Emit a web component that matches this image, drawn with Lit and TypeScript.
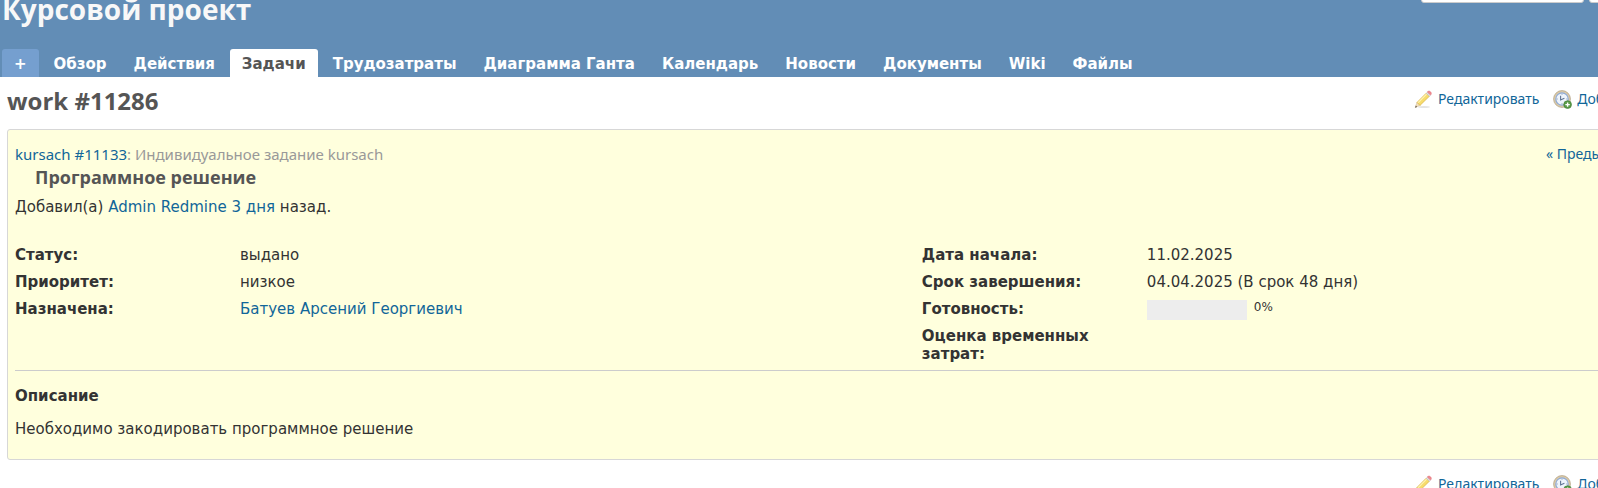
import { LitElement, html, css, svg, nothing } from "lit";
import { customElement, property } from "lit/decorators.js";

const tabs = ["Обзор", "Действия", "Задачи", "Трудозатраты", "Диаграмма Ганта", "Календарь", "Новости", "Документы", "Wiki", "Файлы"];

const pencil = svg`
  <ellipse cx="10" cy="17" rx="6" ry="1" fill="#e4e4e4"/>
  <path d="M1.2 17.4 3 12.4 6 15.4Z" fill="#f3dfbd" stroke="#cdb78d" stroke-width=".5"/>
  <path d="M1 17.8 1.9 15.6 3.2 16.9Z" fill="#5f5a50"/>
  <path d="M3 12.4 12.2 3.2 15.4 6.2 6 15.4Z" fill="#f7dc6c" stroke="#d9b24a" stroke-width=".7"/>
  <path d="M4.2 12.6 12.6 4.2" stroke="#fdf3b4" stroke-width="1.2"/>
  <path d="M12.2 3.2 13.4 2 16.6 5.1 15.4 6.2Z" fill="#dfe2e6" stroke="#b5b9be" stroke-width=".4"/>
  <path d="M13.3 2C14.2.9 15.5.8 16.5 1.8 17.6 2.8 17.6 4 16.6 5.1Z" fill="#f08a90" stroke="#dc6a72" stroke-width=".5"/>`;

const clock = svg`
  <circle cx="9" cy="9" r="8.4" fill="#dccaa8" stroke="#b5a68a" stroke-width=".8"/>
  <circle cx="9" cy="9" r="6.2" fill="#eef4fc" stroke="#8fabd6" stroke-width="1.2"/>
  <path d="M9 3.6v1.2M9 13.2v1.2M3.6 9h1.2M13.2 9h1.2" stroke="#8fa3bd" stroke-width=".9"/>
  <path d="M7.6 5.8V10L11.4 8.2" fill="none" stroke="#5f7494" stroke-width="1.1"/>
  <circle cx="14.6" cy="14.6" r="3.9" fill="#5a9a48" stroke="#3d7a32" stroke-width=".6"/>
  <path d="M14.6 12.4v4.4M12.4 14.6h4.4" stroke="#fff" stroke-width="1.4"/>`;

@customElement("issue-actions")
class IssueActions extends LitElement {
  static styles = css`
    :host { display: flex; flex: 0 0 184px; overflow: hidden; gap: 14px; font-family: Tahoma, "Noto Sans", sans-serif; font-size: 14px; line-height: 20px; }
    a { display: flex; flex: none; align-items: center; gap: 5px; color: #116699; text-decoration: none; white-space: nowrap; }
    svg { width: 19px; height: 19px; flex: none; }
  `;
  render() {
    return html`
      <a href="#edit"><svg viewBox="0 0 19 19" aria-hidden="true">${pencil}</svg>Редактировать</a>
      <a href="#time"><svg viewBox="0 0 19 19" aria-hidden="true">${clock}</svg>Добавить</a>`;
  }
}

@customElement("issue-attribute")
class IssueAttribute extends LitElement {
  @property() label = "";
  static styles = css`
    :host { display: flex; line-height: 18px; }
    .label { flex: none; box-sizing: border-box; width: 225px; padding-right: 40px; font-weight: bold; }
    .value { flex: 1; }
  `;
  render() {
    return html`<div class="label">${this.label}</div><div class="value"><slot></slot></div>`;
  }
}

@customElement("app-root")
class AppRoot extends LitElement {
  static styles = css`
    :host { display: block; height: 100vh; overflow: hidden; background: #fff; color: #333; font-family: Verdana, "DejaVu Sans", sans-serif; font-size: 15px; line-height: 18px; }
    a { color: #116699; text-decoration: none; }
    h1, h2, h3, p { margin: 0; }
    h1, h2, h3 { font-family: "Trebuchet MS", "Open Sans", sans-serif; font-weight: 700; }
    header { background: #628db6; }
    .top { display: flex; justify-content: space-between; height: 49px; padding-left: 2px; }
    h1 { color: #f8f8f8; font-size: 28px; line-height: 40px; margin-top: -11px; }
    .search { display: flex; gap: 5px; flex: 0 0 177px; overflow: hidden; margin-top: -21px; height: 24px; }
    .search input, .search select { box-sizing: border-box; flex: none; width: 163px; height: 24px; border: 1px solid #ccc; border-radius: 3px; background: #fff; }
    nav { display: flex; gap: 3px; padding-left: 2px; }
    .tab { padding: 2px 12px 0; font-size: 15px; font-weight: bold; line-height: 26px; color: #fff; border-radius: 3px 3px 0 0; white-space: nowrap; }
    .add { background: #759fcf; }
    .selected { background: #fff; color: #555; }
    .bar { display: flex; justify-content: space-between; align-items: flex-start; padding-left: 7px; }
    .title { padding-top: 12px; height: 40px; }
    h2 { color: #555; font-size: 24px; line-height: 24px; }
    .page { box-sizing: border-box; width: 115%; padding: 0 7px; }
    .issue { border: 1px solid #d7d7d7; border-radius: 3px; background: #ffffdd; padding: 0 7px; }
    .crumbs { display: flex; justify-content: space-between; width: calc(100vw - 15px); padding-top: 15px; font-family: Tahoma, "Noto Sans", sans-serif; line-height: 18px; color: #999; }
    .previous { flex: 0 0 52px; overflow: hidden; white-space: nowrap; font-size: 14px; }
    h3 { color: #555; font-size: 18px; line-height: 26px; padding: 1px 0 3px 20px; }
    .author { line-height: 28px; }
    .attributes { display: grid; grid-template-columns: 1fr 1fr; column-gap: 6px; padding: 25px 0 7px; border-bottom: 1px solid #ccc; }
    .column { display: flex; flex-direction: column; gap: 9px; }
    .progress { display: flex; gap: 7px; height: 18px; }
    .track { width: 100px; height: 20px; background: #ededed; }
    .percent { font-size: 12px; line-height: 14px; }
    .description { display: flex; flex-direction: column; gap: 15px; padding: 16px 0 21px; }
    .bottom { justify-content: flex-end; padding-top: 14px; }
  `;
  render() {
    return html`
      <header>
        <div class="top">
          <h1>Курсовой проект</h1>
          <div class="search"><input type="search" aria-label="Поиск"><select aria-label="Проект"></select></div>
        </div>
        <nav>
          <a class="tab add" href="#new">+</a>
          ${tabs.map((t) => html`<a class="tab ${t === "Задачи" ? "selected" : ""}" href="#tab" aria-current=${t === "Задачи" ? "page" : nothing}>${t}</a>`)}
        </nav>
      </header>
      <main>
        <div class="bar title"><h2>work #11286</h2><issue-actions></issue-actions></div>
        <div class="page">
          <section class="issue">
            <div class="crumbs">
              <div><a href="#11133">kursach #11133</a>: Индивидуальное задание kursach</div>
              <a class="previous" href="#previous">« Предыдущее</a>
            </div>
            <h3>Программное решение</h3>
            <p class="author">Добавил(а) <a href="#admin">Admin Redmine</a> <a href="#activity">3 дня</a> назад.</p>
            <div class="attributes">
              <div class="column">
                <issue-attribute label="Статус:">выдано</issue-attribute>
                <issue-attribute label="Приоритет:">низкое</issue-attribute>
                <issue-attribute label="Назначена:"><a href="#user">Батуев Арсений Георгиевич</a></issue-attribute>
              </div>
              <div class="column">
                <issue-attribute label="Дата начала:">11.02.2025</issue-attribute>
                <issue-attribute label="Срок завершения:">04.04.2025 (В срок 48 дня)</issue-attribute>
                <issue-attribute label="Готовность:"><div class="progress"><div class="track"></div><span class="percent">0%</span></div></issue-attribute>
                <issue-attribute label="Оценка временных затрат:"></issue-attribute>
              </div>
            </div>
            <div class="description">
              <strong>Описание</strong>
              <p>Необходимо закодировать программное решение</p>
            </div>
          </section>
        </div>
        <div class="bar bottom"><issue-actions></issue-actions></div>
      </main>`;
  }
}
